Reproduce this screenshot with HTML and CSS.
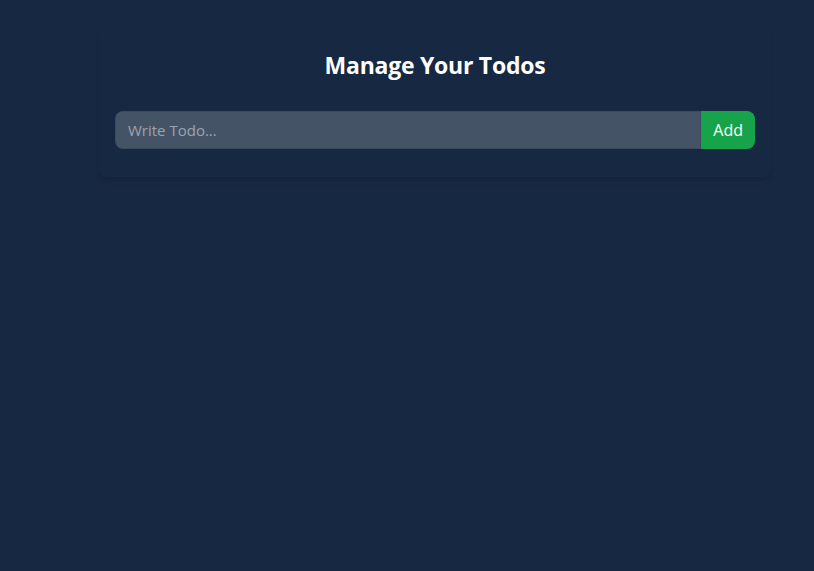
FILE: index.html
```html
<!DOCTYPE html>
<html lang="en">
<head>
<meta charset="utf-8">
<title>Todo</title>
<link rel="stylesheet" href="styles.css">
</head>
<body>
<div class="page">
  <div class="card">
    <h1 class="title">Manage Your Todos</h1>
    <div class="form-wrap">
      <form class="todo-form">
        <input class="todo-input" type="text" placeholder="Write Todo..." autofocus>
        <button class="add-btn" type="button">Add</button>
      </form>
    </div>
    <div class="todo-list"></div>
  </div>
</div>
</body>
</html>
```

FILE: styles.css
```css
* { box-sizing: border-box; }
html, body { margin: 0; padding: 0; }
body {
  background: #172842;
  font-family: "Open Sans", "Noto Sans", sans-serif;
  color: #fff;
}
.page {
  min-height: 571px;
  padding-top: 27px;
}
.card {
  width: 672px;
  margin-left: 99px;
  padding: 12px 16px;
  border-radius: 8px;
  box-shadow: 0 5px 6px -2px rgba(0,0,0,0.1), 0 3px 4px -3px rgba(0,0,0,0.1);
}
.title {
  margin: 10px 0 30px;
  font-size: 23px;
  line-height: 32px;
  letter-spacing: -0.25px;
  font-weight: 700;
  text-align: center;
}
.form-wrap { margin-bottom: 16px; }
.todo-form { display: flex; margin: 0; }
.todo-input {
  flex: 1;
  min-width: 0;
  border: 1px solid rgba(0,0,0,0.1);
  border-radius: 8px 0 0 8px;
  padding: 6px 12px;
  font: inherit;
  font-size: 15px;
  line-height: 24px;
  color: #fff;
  background: rgba(255,255,255,0.2);
  outline: none;
  caret-color: #fff;
}
.todo-input::placeholder { color: #9ca3af; }
.add-btn {
  flex-shrink: 0;
  border: 0;
  border-radius: 0 8px 8px 0;
  padding: 4px 12px;
  background: #16a34a;
  color: #fff;
  font: inherit;
  font-size: 16px;
  line-height: 24px;
}
.todo-list { display: flex; flex-wrap: wrap; row-gap: 12px; }
```
